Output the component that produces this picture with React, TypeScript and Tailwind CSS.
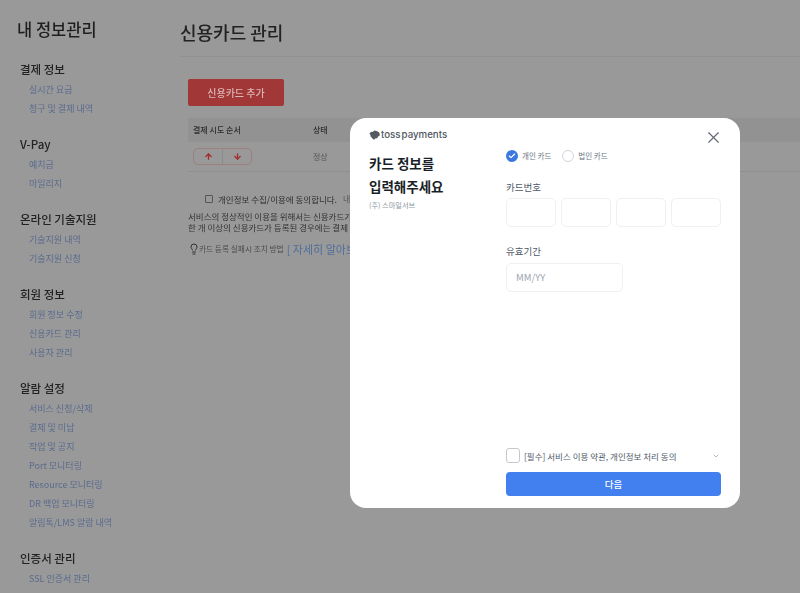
import React from 'react';
import { X, ChevronDown, Check, ArrowUp, ArrowDown, Lightbulb } from 'lucide-react';

const menu = [
  { title: '결제 정보', links: ['실시간 요금', '청구 및 결제 내역'] },
  { title: 'V-Pay', links: ['예치금', '마일리지'] },
  { title: '온라인 기술지원', links: ['기술지원 내역', '기술지원 신청'] },
  { title: '회원 정보', links: ['회원 정보 수정', '신용카드 관리', '사용자 관리'] },
  {
    title: '알람 설정',
    links: ['서비스 신청/삭제', '결제 및 미납', '작업 및 공지', 'Port 모니터링', 'Resource 모니터링', 'DR 백업 모니터링', '알림톡/LMS 알람 내역'],
  },
  { title: '인증서 관리', links: ['SSL 인증서 관리'] },
];

const font = "font-['Noto_Sans_CJK_KR','Noto_Sans',sans-serif]";

const Sidebar = () => (
  <aside className="w-[180px] shrink-0 pl-[17px] pt-[17px]">
    <h1 className="text-[16.5px] leading-[24px] font-medium text-[#1f1f1f]">내 정보관리</h1>
    <div className="mt-[19px] flex flex-col gap-[17px] pl-[3px]">
      {menu.map((group) => (
        <div key={group.title}>
          <h2 className="text-[11.5px] leading-[18px] font-medium text-[#222]">{group.title}</h2>
          <ul className="mt-[2px] pl-[9px]">
            {group.links.map((link) => (
              <li key={link} className="text-[9px] leading-[19px] text-[#5a6b8e]">
                {link}
              </li>
            ))}
          </ul>
        </div>
      ))}
    </div>
  </aside>
);

const Main = () => (
  <main className="flex-1 pt-[19px]">
    <h1 className="text-[18px] leading-[26px] font-medium text-[#222]">신용카드 관리</h1>
    <div className="mt-[11px] h-px bg-[#919191]" />
    <div className="pl-[8px] pt-[21px]">
      <button className="h-[27px] w-[96px] rounded-[2px] bg-[#a23737] text-[10px] font-medium text-[#dcb6b6]">
        신용카드 추가
      </button>
      <div className="mt-[12px] flex h-[24px] items-center bg-[#929292] text-[8px] font-medium text-[#2e2e2e]">
        <span className="w-[125px] pl-[5px]">결제 시도 순서</span>
        <span>상태</span>
      </div>
      <div className="flex h-[30px] items-center border-b border-[#8f8f8f] text-[8px] text-[#555]">
        <div className="ml-[5px] mr-[61px] flex h-[17px] w-[59px] rounded-[5px] border border-[#9c7f7f]">
          <span className="flex flex-1 items-center justify-center border-r border-[#8a8a8a]">
            <ArrowUp size={9} strokeWidth={3.5} className="text-[#a52a2a]" />
          </span>
          <span className="flex flex-1 items-center justify-center">
            <ArrowDown size={9} strokeWidth={3.5} className="text-[#a52a2a]" />
          </span>
        </div>
        <span>정상</span>
      </div>
      <div className="mt-[20px] flex items-center whitespace-nowrap pl-[17px] text-[8.5px] leading-[14px] text-[#2e2e2e]">
        <span className="mr-[5px] h-[8px] w-[8px] shrink-0 rounded-[1px] border border-[#555]" />
        <span>개인정보 수집/이용에 동의합니다.</span>
        <span className="ml-[6px] text-[8px] text-[#555]">내역</span>
      </div>
      <p className="mt-[5px] whitespace-nowrap text-[8.5px] leading-[11px] text-[#333]">
        서비스의 정상적인 이용을 위해서는 신용카드가 등록
        <br />
        한 개 이상의 신용카드가 등록된 경우에는 결제 요청
      </p>
      <div className="mt-[8px] flex items-center whitespace-nowrap">
        <Lightbulb size={12} className="shrink-0 text-[#333]" />
        <span className="ml-[-1px] text-[7.7px] text-[#4d4d4d]">카드 등록 실패시 조치 방법</span>
        <span className="ml-[3px] text-[11px] text-[#4f6d9c]">[ 자세히 알아보기 ]</span>
      </div>
    </div>
  </main>
);

const TossLogo = () => (
  <div className="mt-[1px] flex items-center">
    <svg width="11" height="10" viewBox="0 0 11 10">
      <path
        d="M.4 3.2 2.4 1.8 3.6 1.9 5.4.4 7.6.9 8.6 1.6 10.2 2.4 10.8 4.4 10.4 6 9 6.6 8.2 8.2 6.2 8.6 5 9.8 3.4 8.6 2.4 7.2 1.6 6.6 1.4 5Z"
        fill="#555b63"
      />
    </svg>
    <span className="ml-[1px] font-['Inter',sans-serif] text-[9.7px] leading-none font-medium [word-spacing:-1.5px] text-[#4e5661]">
      toss payments
    </span>
  </div>
);

const CardBox = ({ className }: { className: string }) => (
  <div className={`h-[29px] rounded-[5px] border border-[#eef0f2] ${className}`} />
);

const Modal = () => (
  <div className="flex h-[390px] w-[390px] flex-col rounded-[16px] bg-white pb-[12px] pl-[19px] pr-[19px] pt-[11px]">
    <div className="flex min-h-0 flex-1">
      <div className="w-[137px] shrink-0">
        <TossLogo />
        <h2 className="mt-[12px] text-[13.5px] leading-[23px] font-bold text-[#191f28]">
          카드 정보를
          <br />
          입력해주세요
        </h2>
        <p className="mt-[2px] text-[7.2px] leading-[11px] text-[#8b95a1]">(주) 스마일서브</p>
      </div>
      <div className="flex-1 pt-[21px]">
        <div className="flex items-center text-[7.5px] leading-[12px] text-[#6b7684]">
          <span className="flex h-[12px] w-[12px] items-center justify-center rounded-full bg-[#3b78e0]">
            <Check size={8} strokeWidth={3.5} className="text-white" />
          </span>
          <span className="ml-[4px]">개인 카드</span>
          <span className="ml-[11px] h-[12px] w-[12px] rounded-full border border-[#d1d6db]" />
          <span className="ml-[4px]">법인 카드</span>
        </div>
        <p className="mt-[18px] text-[9.5px] leading-[14px] text-[#4e5968]">카드번호</p>
        <div className="mt-[4px] flex gap-[5px]">
          <CardBox className="w-[50px]" />
          <CardBox className="w-[50px]" />
          <CardBox className="w-[50px]" />
          <CardBox className="w-[50px]" />
        </div>
        <p className="mt-[17px] text-[9.5px] leading-[14px] text-[#4e5968]">유효기간</p>
        <div className="mt-[5px] flex h-[29px] w-[117px] items-center rounded-[5px] border border-[#eef0f2] pl-[9px] text-[9.5px] text-[#9aa3ad]">
          MM/YY
        </div>
      </div>
    </div>
    <div className="ml-[137px] flex items-center">
      <span className="h-[15px] w-[14px] rounded-[3px] border border-[#c4c9cf]" />
      <span className="ml-[4px] flex-1 text-[8.5px] leading-[14px] text-[#4e5968]">[필수] 서비스 이용 약관, 개인정보 처리 동의</span>
      <ChevronDown size={8} className="mr-[1px] text-[#8b95a1]" />
    </div>
    <button className="ml-[137px] mt-[9px] h-[24px] w-[215px] shrink-0 rounded-[4px] bg-[#4280ef] text-[9.5px] font-medium text-white">
      다음
    </button>
    <X size={19} strokeWidth={1.4} className="absolute right-[17.5px] top-[9.5px] text-[#5f6670]" />
  </div>
);

export default function App() {
  return (
    <div className={`relative h-[593px] w-[800px] overflow-hidden bg-[#999999] ${font}`}>
      <div className="flex blur-[0.4px]">
        <Sidebar />
        <Main />
      </div>
      <div className="absolute left-[350px] top-[118px]">
        <Modal />
      </div>
    </div>
  );
}
